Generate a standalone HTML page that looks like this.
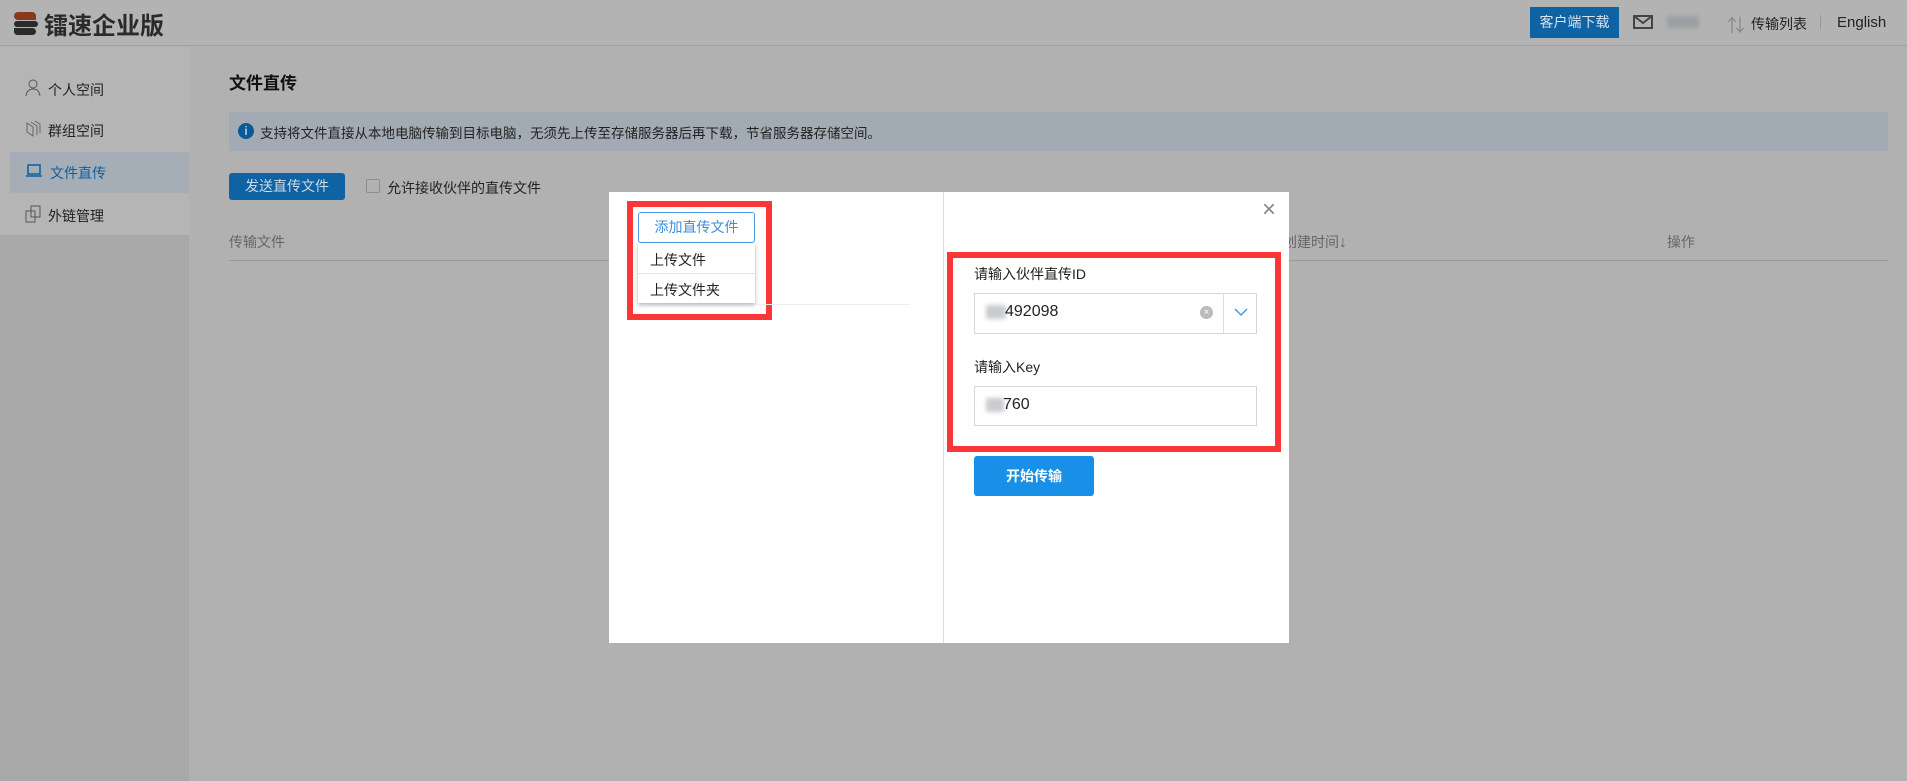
<!DOCTYPE html>
<html><head><meta charset="utf-8"><style>
*{margin:0;padding:0;box-sizing:border-box}
body{width:1907px;height:781px;overflow:hidden;background:#b1b1b1;font-family:"Liberation Sans","Noto Sans CJK SC",sans-serif;font-size:14px;color:#222;position:relative}
.a{position:absolute;white-space:nowrap}
</style></head><body>
<div class="a" style="left:0;top:0;width:1907px;height:46px;background:#b3b3b3;border-bottom:1px solid #a2a2a2"></div>
<div class="a" style="left:12px;top:12px;width:30px;height:24px">
<div style="position:absolute;left:2px;top:0;width:22px;height:8px;background:#8a3a1c;border-radius:4px 4px 0 4px"></div>
<div style="position:absolute;left:2px;top:9px;width:24px;height:6px;background:#2b2b2b;border-radius:3px"></div>
<div style="position:absolute;left:2px;top:16px;width:22px;height:7px;background:#2b2b2b;border-radius:0 4px 4px 4px"></div></div>
<div class="a" style="left:44px;top:6px;font-size:24px;font-weight:bold;color:#2a2a2a">镭速企业版</div>
<div class="a" style="left:1530px;top:7px;width:89px;height:31px;background:#0e63a5;color:#d8e2ec;font-size:14px;line-height:31px;text-align:center">客户端下载</div>
<div class="a" style="left:1633px;top:15px;width:20px;height:14px;border:2px solid #444"></div>
<svg class="a" style="left:1633px;top:15px" width="20" height="14"><path d="M1 1 L10 8 L19 1" stroke="#444" stroke-width="2" fill="none"/></svg>
<div class="a" style="left:1667px;top:16px;width:32px;height:12px;background:#9a9ea4;filter:blur(2px)"></div>
<div class="a" style="left:1727px;top:12px;color:#888;font-size:18px">⇅</div>
<div class="a" style="left:1751px;top:14px;font-size:14px;color:#222">传输列表</div>
<div class="a" style="left:1820px;top:15px;width:1px;height:14px;background:#999"></div>
<div class="a" style="left:1837px;top:14px;font-size:15px;color:#222">English</div>

<div class="a" style="left:0;top:47px;width:189px;height:188px;background:#b5b5b5"></div>
<div class="a" style="left:0;top:235px;width:189px;height:546px;background:#a8a8a8"></div>
<div class="a" style="left:10px;top:152px;width:179px;height:41px;background:#a5adb6"></div>
<svg class="a" style="left:25px;top:79px" width="16" height="18"><circle cx="8" cy="5" r="4" stroke="#555" fill="none"/><path d="M1 17 Q2 10 8 10 Q14 10 15 17" stroke="#555" fill="none"/></svg>
<div class="a" style="left:48px;top:80px">个人空间</div>
<svg class="a" style="left:25px;top:120px" width="16" height="18"><path d="M2 3 L8 7 L8 16 L2 12Z M6 2 L12 6 L12 15 M10 1 L15 4 L15 13" stroke="#666" fill="none"/></svg>
<div class="a" style="left:48px;top:121px">群组空间</div>
<svg class="a" style="left:25px;top:164px" width="18" height="14"><rect x="3" y="1" width="12" height="9" stroke="#0e5fa0" fill="none" stroke-width="1.5"/><path d="M1 12 H17" stroke="#0e5fa0" stroke-width="1.5"/></svg>
<div class="a" style="left:50px;top:163px;color:#0e5fa0">文件直传</div>
<svg class="a" style="left:25px;top:205px" width="16" height="18"><rect x="1" y="6" width="9" height="11" stroke="#555" fill="none"/><rect x="6" y="1" width="9" height="11" stroke="#555" fill="none"/></svg>
<div class="a" style="left:48px;top:206px">外链管理</div>

<div class="a" style="left:229px;top:69px;font-size:17px;font-weight:bold;color:#111">文件直传</div>
<div class="a" style="left:229px;top:112px;width:1659px;height:39px;background:#a2abb4"></div>
<div class="a" style="left:238px;top:123px;width:16px;height:16px;border-radius:50%;background:#0b5a98;color:#b8c4d0;font-size:12px;line-height:16px;text-align:center;font-weight:bold">i</div>
<div class="a" style="left:260px;top:122px;font-size:13.5px;color:#222">支持将文件直接从本地电脑传输到目标电脑，无须先上传至存储服务器后再下载，节省服务器存储空间。</div>
<div class="a" style="left:229px;top:173px;width:116px;height:27px;background:#0e63a5;color:#cdd9e5;border-radius:3px;line-height:27px;text-align:center">发送直传文件</div>
<div class="a" style="left:366px;top:179px;width:14px;height:14px;border:1px solid #8e8e8e;border-radius:2px"></div>
<div class="a" style="left:387px;top:178px">允许接收伙伴的直传文件</div>
<div class="a" style="left:229px;top:232px;color:#666">传输文件</div>
<div class="a" style="left:1283px;top:232px;color:#666">创建时间<span style="font-size:16px">↓</span></div>
<div class="a" style="left:1667px;top:232px;color:#666">操作</div>
<div class="a" style="left:229px;top:260px;width:1659px;height:1px;background:#999"></div>

<div class="a" style="left:609px;top:192px;width:680px;height:451px;background:#fff"></div>
<div class="a" style="left:943px;top:192px;width:1px;height:451px;background:#ddd"></div>
<div class="a" style="left:1262px;top:196px;font-size:24px;color:#888">×</div>
<div class="a" style="left:627px;top:201px;width:145px;height:119px;border:6px solid #fa3636"></div>
<div class="a" style="left:638px;top:212px;width:117px;height:31px;border:1px solid #4d9be6;border-radius:3px;color:#3c8ddf;line-height:29px;text-align:center">添加直传文件</div>
<div class="a" style="left:638px;top:243px;width:117px;height:60px;background:#fff;box-shadow:0 2px 4px rgba(0,0,0,.3)"></div>
<div class="a" style="left:650px;top:250px">上传文件</div>
<div class="a" style="left:638px;top:273px;width:117px;height:1px;background:#e3e3e3"></div>
<div class="a" style="left:650px;top:280px">上传文件夹</div>
<div class="a" style="left:755px;top:304px;width:155px;height:1px;background:#eee"></div>

<div class="a" style="left:947px;top:252px;width:334px;height:200px;border:6px solid #fa3636"></div>
<div class="a" style="left:974px;top:264px">请输入伙伴直传ID</div>
<div class="a" style="left:974px;top:293px;width:283px;height:41px;border:1px solid #d6d6d6"></div>
<div class="a" style="left:1223px;top:293px;width:1px;height:41px;background:#ddd"></div>
<div class="a" style="left:986px;top:305px;width:20px;height:14px;background:#c9ccd0;filter:blur(2px)"></div>
<div class="a" style="left:1005px;top:303px;font-size:16px">492098</div>
<div class="a" style="left:1200px;top:306px;width:13px;height:13px;border-radius:50%;background:#bbb;color:#fff;font-size:10px;line-height:13px;text-align:center">×</div>
<svg class="a" style="left:1234px;top:307px" width="14" height="10"><path d="M1 2 L7 8 L13 2" stroke="#3c8ddf" stroke-width="1.3" fill="none"/></svg>
<div class="a" style="left:974px;top:357px">请输入Key</div>
<div class="a" style="left:974px;top:386px;width:283px;height:40px;border:1px solid #d6d6d6"></div>
<div class="a" style="left:986px;top:398px;width:18px;height:14px;background:#c9ccd0;filter:blur(2px)"></div>
<div class="a" style="left:1003px;top:396px;font-size:16px">760</div>
<div class="a" style="left:974px;top:456px;width:120px;height:40px;background:#1890e8;border-radius:3px;color:#fff;font-weight:bold;line-height:40px;text-align:center">开始传输</div>
</body></html>
